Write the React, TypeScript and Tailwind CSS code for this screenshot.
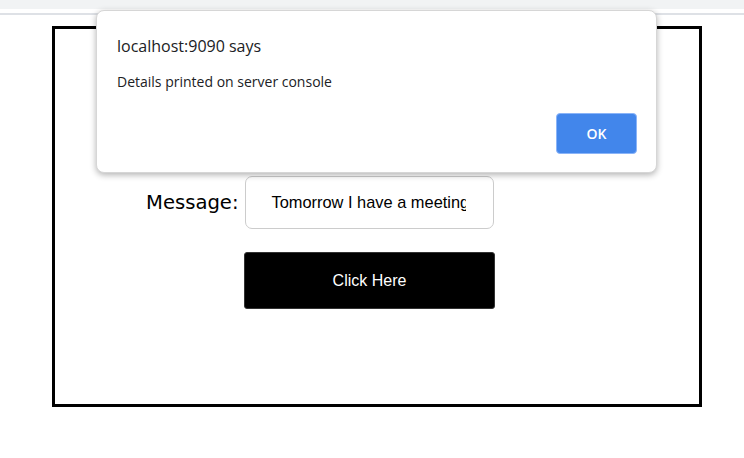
import React from "react";

export default function App() {
  return (
    <div className="relative w-[744px] h-[458px] bg-white overflow-hidden">
      <div className="h-[9px] bg-[#f1f3f4]" />
      <div className="h-[4px] bg-white" />
      <div className="h-[2px] bg-[#dee1e6]" />
      <div className="pt-[11px] pl-[52px]">
        <div className="w-[650px] h-[381px] border-[3px] border-black flex flex-col items-start pt-[147px]">
          <div className="flex items-center pl-[91px]">
            <span
              className="text-[19.6px] text-black mr-[7px]"
              style={{ fontFamily: '"DejaVu Sans", sans-serif' }}
            >
              Message:
            </span>
            <input
              readOnly
              value="Tomorrow I have a meeting"
              className="w-[249px] h-[53px] rounded-[7px] border border-[#cccccc] pl-[25px] pr-[27px] text-[16.4px] text-black outline-none"
              style={{ fontFamily: '"Liberation Sans", Arial, sans-serif' }}
            />
          </div>
          <button
            className="mt-[23px] w-[251px] h-[57px] bg-black text-white rounded-[3px] border border-[#333] text-[16px] ml-[189px]"
            style={{ fontFamily: '"Liberation Sans", Arial, sans-serif' }}
          >
            Click Here
          </button>
        </div>
      </div>

      <div
        className="absolute left-[96px] top-[10px] w-[561px] h-[163px] bg-white rounded-[8px] border border-[#d6d6d6] shadow-[0_2px_6px_rgba(0,0,0,0.3)]"
        style={{ fontFamily: '"Open Sans", "Noto Sans", sans-serif' }}
      >
        <div className="pl-[20px] pt-[23px] text-[16px] text-[#202124] leading-[24px]">
          localhost:9090 says
        </div>
        <div className="pl-[20px] pt-[14px] text-[14px] text-[#202124] leading-[20px]">
          Details printed on server console
        </div>
        <div className="flex justify-end pr-[19px] pt-[21px]">
          <button className="w-[81px] h-[41px] rounded-[4px] bg-[#4286eb] border border-[#8ab4f8] text-white text-[14px] font-semibold">
            OK
          </button>
        </div>
      </div>
    </div>
  );
}
